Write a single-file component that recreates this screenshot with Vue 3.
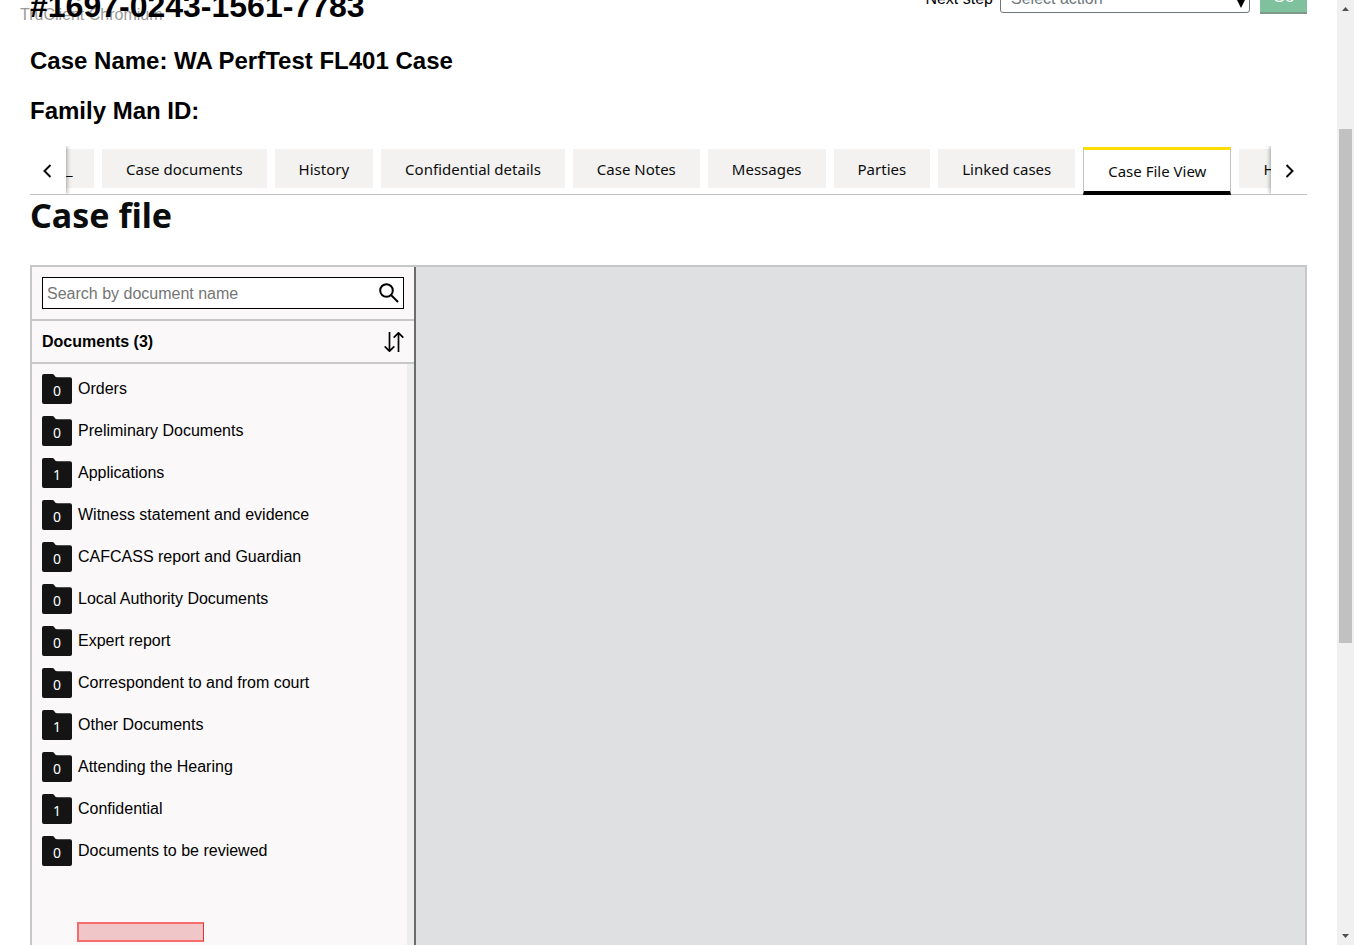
<script setup>
import { ref } from 'vue'

const search = ref('')
const action = ref('')
const tabs = ['Case documents', 'History', 'Confidential details', 'Case Notes', 'Messages', 'Parties', 'Linked cases', 'Case File View', 'Hearings']
const active = ref('Case File View')
const folders = [
  { name: 'Orders', count: 0 },
  { name: 'Preliminary Documents', count: 0 },
  { name: 'Applications', count: 1 },
  { name: 'Witness statement and evidence', count: 0 },
  { name: 'CAFCASS report and Guardian', count: 0 },
  { name: 'Local Authority Documents', count: 0 },
  { name: 'Expert report', count: 0 },
  { name: 'Correspondent to and from court', count: 0 },
  { name: 'Other Documents', count: 1 },
  { name: 'Attending the Hearing', count: 0 },
  { name: 'Confidential', count: 1 },
  { name: 'Documents to be reviewed', count: 0 },
]
</script>

<template>
  <div class="window">
    <main class="page">
      <span class="watermark">TruClient Chromium</span>
      <header class="top">
        <h1 class="case-number">#1697-0243-1561-7783</h1>
        <form class="next" @submit.prevent>
          <label for="next-step">Next step</label>
          <span class="select-wrap">
            <select id="next-step" v-model="action">
              <option value="">Select action</option>
            </select>
            <svg class="caret" viewBox="0 0 8 12" aria-hidden="true"><path d="M0 4h8L4 12z" /></svg>
          </span>
          <button class="go" type="submit" disabled>Go</button>
        </form>
      </header>
      <h2 class="case-line">Case Name: WA PerfTest FL401 Case</h2>
      <h2 class="case-line">Family Man ID:</h2>

      <nav class="tabbar">
        <button class="pager left" aria-label="Previous tabs">
          <svg viewBox="0 0 12 16"><path d="M8.500 3 2.500 9l6 6" /></svg>
        </button>
        <div class="tabs">
          <button class="tab partial"><span>_</span></button>
          <button v-for="t in tabs" :key="t" class="tab" :class="{ active: t === active }" @click="active = t">{{ t }}</button>
        </div>
        <button class="pager right" aria-label="Next tabs">
          <svg viewBox="0 0 12 16"><path d="M3.500 3l6 6-6 6" /></svg>
        </button>
      </nav>

      <h2 class="title">Case file</h2>

      <section class="viewer">
        <aside class="side">
          <div class="search-area">
            <div class="search">
              <input v-model="search" type="text" aria-label="Search by document name" placeholder="Search by document name" />
              <svg viewBox="0 0 20 20" aria-hidden="true"><circle cx="7.500" cy="7.500" r="6.300" /><path d="M12 12l7 7" /></svg>
            </div>
          </div>
          <div class="docs-head">
            <h3>Documents (3)</h3>
            <button class="sort" aria-label="Sort documents">
              <svg viewBox="0 0 20 20"><path d="M5.500 0v19M.700 14.300l4.800 4.900 4.800-4.900M14.500 20V1M9.700 5.700l4.800-4.900 4.800 4.900" /></svg>
            </button>
          </div>
          <div class="docs-body">
            <ul class="folders">
              <li v-for="f in folders" :key="f.name">
                <button class="folder">
                  <span class="icon">
                    <svg viewBox="0 0 30 30" aria-hidden="true"><path d="M0 2Q0 0 2 0H10.500Q12 0 12.500 1.500T15 3.300H28Q30 3.300 30 5.300V28Q30 30 28 30H2Q0 30 0 28Z" /></svg>
                    <span class="count">{{ f.count }}</span>
                  </span>
                  <span class="name">{{ f.name }}</span>
                </button>
              </li>
            </ul>
            <div class="marker"></div>
          </div>
        </aside>
        <div class="preview"></div>
      </section>
    </main>
    <div class="scrollbar" aria-hidden="true">
      <svg viewBox="0 0 7 4"><path d="M0 4h7L3.500 0z" /></svg>
      <div class="track"><div class="thumb"></div></div>
      <svg viewBox="0 0 7 4"><path d="M0 0h7L3.500 4z" /></svg>
    </div>
  </div>
</template>

<style>
body { margin: 0; background: #fff; }
</style>

<style scoped>
* { box-sizing: border-box; }
h1, h2, h3, ul { margin: 0; padding: 0; }
button { font: inherit; color: inherit; border: 0; border-radius: 0; background: none; padding: 0; }
svg { display: block; }
.window {
  display: flex; height: 100vh; overflow: hidden;
  font: 16px/20px "Liberation Sans", Arial, sans-serif; color: #000;
}
.page {
  position: relative; z-index: 0; flex: 1; min-width: 0;
  display: flex; flex-direction: column; padding: 0 30px;
}
.watermark { position: absolute; z-index: -1; left: 20px; top: 5px; color: #999; }
.top {
  display: flex; justify-content: space-between; align-items: flex-end;
  flex: none; height: 40px; margin-top: -14px; margin-bottom: 20px;
}
.case-number { font-size: 32px; line-height: 40px; align-self: flex-start; }
.next { display: flex; align-items: flex-end; padding-bottom: 12px; }
.next label { line-height: 24px; padding-bottom: 3px; margin-right: 7px; }
.select-wrap { position: relative; margin-right: 10px; }
.select-wrap select {
  display: block; appearance: none; width: 250px; height: 28px; padding: 0 10px; margin-bottom: 1px;
  font: inherit; color: #6f777b; background: #fff; border: 1px solid #6f777b; border-radius: 3px;
}
.caret { position: absolute; right: 5px; bottom: 6px; width: 8px; height: 12px; }
.go {
  width: 47px; height: 32px; background: #80c19d; color: #fff;
  border-bottom: 2px solid #80988a;
}
.case-line { font-size: 24px; line-height: 30px; margin-bottom: 20px; }

.tabbar {
  position: relative; flex: none; display: flex; height: 49px;
  border-bottom: 1px solid #bfc1c3; font: 15px/24px "Noto Sans", sans-serif; color: #0b0c0c;
}
.pager { flex: none; width: 36px; display: flex; align-items: center; justify-content: center; background: #fff; z-index: 1; }
.pager svg { width: 12px; height: 16px; fill: none; stroke: #0b0c0c; stroke-width: 2; }
.left { box-shadow: 1px 0 4px rgba(0, 0, 0, .35); clip-path: inset(0 -6px 0 0); }
.right { box-shadow: -1px 0 4px rgba(0, 0, 0, .35); clip-path: inset(0 0 0 -6px); }
.tabs {
  flex: 1; min-width: 0; display: flex; align-items: flex-start; gap: 8px;
  overflow: hidden; padding-top: 3px; margin-bottom: -1px;
}
.tab { flex: none; height: 39px; padding: 0 24px; background: #f3f2f1; white-space: nowrap; }
.tab.partial { width: 28px; padding: 0; text-align: left; }
.tab.active {
  height: 48px; margin-top: -2px; background: #fff;
  border: 1px solid #bfc1c3; border-top: 3px solid #ffdd00; border-bottom: 4px solid #000;
}
.title { font: bold 34px/40px "Noto Sans", sans-serif; color: #0b0c0c; margin-bottom: 30px; }

.viewer { flex: 1; min-height: 0; display: flex; border: 2px solid #c6c7c9; border-bottom: 0; background: #dee0e2; }
.side {
  flex: none; width: 384px; display: flex; flex-direction: column;
  background: #faf8f9; border-right: 2px solid #6b6c6d;
}
.search-area { padding: 10px; border-bottom: 2px solid #c8c8c8; }
.search {
  display: flex; align-items: center; justify-content: space-between;
  height: 32px; border: 1px solid #000; background: #fff; padding: 0 4px;
}
.search input { flex: 1; min-width: 0; border: 0; outline: 0; padding: 2px 0 0; background: none; font: inherit; }
.search input::placeholder { color: #757575; opacity: 1; }
.search svg { width: 20px; height: 20px; fill: none; stroke: #000; stroke-width: 2; }
.docs-head {
  display: flex; align-items: center; justify-content: space-between;
  height: 43px; padding: 0 10px; border-bottom: 2px solid #c8c8c8;
}
.docs-head h3 { font-size: 16px; line-height: 20px; }
.sort svg { width: 20px; height: 20px; fill: none; stroke: #000; stroke-width: 1.700; }
.docs-body { flex: 1; min-height: 0; overflow: hidden; padding: 10px 10px 0; border-right: 7px solid #ededed; }
.folders { list-style: none; display: grid; gap: 12px; }
.folder { display: flex; width: 100%; text-align: left; gap: 6px; }
.icon { display: grid; width: 30px; height: 30px; }
.icon svg, .count { grid-area: 1 / 1; }
.icon svg { width: 30px; height: 30px; fill: #141414; }
.count { color: #fff; text-align: center; font: 14px/34px "Noto Sans", sans-serif; }
.name { line-height: 30px; }
.marker { width: 127px; height: 20px; margin: 56px 0 0 35px; background: #f1c6c8; border: 2px solid #f76d6d; border-right: 1px solid #e52e2e; }
.preview { flex: 1; }

.scrollbar {
  flex: none; width: 17px; display: flex; flex-direction: column; align-items: center;
  background: #f0f0f0; padding: 7px 0;
}
.scrollbar svg { flex: none; width: 7px; height: 4px; fill: #505050; }
.track { flex: 1; width: 13px; margin: 6px 0; display: flex; flex-direction: column; }
.thumb { margin-top: 112px; height: 514px; background: #c1c1c1; }
</style>
